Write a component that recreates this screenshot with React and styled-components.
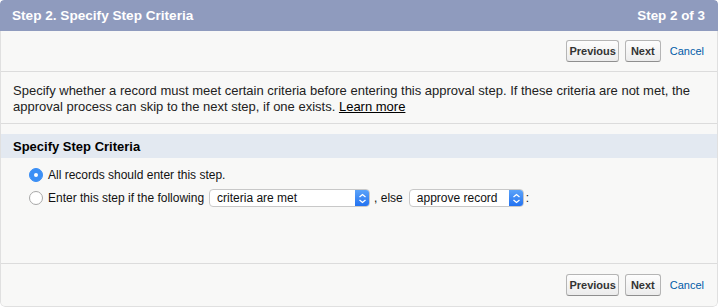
import styled, { createGlobalStyle } from "styled-components";

const GlobalStyle = createGlobalStyle`
  html, body {
    margin: 0;
    padding: 0;
    background: #ffffff;
  }
  body {
    font-family: "Liberation Sans", Arial, sans-serif;
  }
`;

export default function App() {
  return (
    <>
      <GlobalStyle />
      <Page>
        <Header>
          <Title>Step 2. Specify Step Criteria</Title>
          <StepCount>Step 2 of 3</StepCount>
        </Header>
        <Body>
          <ButtonRow>
            <Button $pad={2}>Previous</Button>
            <Button $pad={5}>Next</Button>
            <CancelLink>Cancel</CancelLink>
          </ButtonRow>
          <Description>
            Specify whether a record must meet certain criteria before entering this approval step. If these
            criteria are not met, the approval process can skip to the next step, if one exists.{" "}
            <LearnMore>Learn more</LearnMore>
          </Description>
          <Section>
            <SectionTitle>Specify Step Criteria</SectionTitle>
            <Options>
              <Option>
                <Radio checked />
                <span>All records should enter this step.</span>
              </Option>
              <Option>
                <Radio />
                <span>Enter this step if the following</span>
                <Select width={161}>
                  <span>criteria are met</span>
                  <Stepper />
                </Select>
                <Else>, else</Else>
                <Select width={115}>
                  <span>approve record</span>
                  <Stepper />
                </Select>
                <Colon>:</Colon>
              </Option>
            </Options>
          </Section>
          <ButtonRow $bottom>
            <Button $pad={2}>Previous</Button>
            <Button $pad={5}>Next</Button>
            <CancelLink>Cancel</CancelLink>
          </ButtonRow>
        </Body>
      </Page>
    </>
  );
}

function Stepper() {
  return (
    <StepperBox>
      <svg width="9" height="11" viewBox="0 0 9 11">
        <path d="M1.5 4 L4.5 1.5 L7.5 4" fill="none" stroke="#fff" strokeWidth="1.3" />
        <path d="M1.5 7 L4.5 9.5 L7.5 7" fill="none" stroke="#fff" strokeWidth="1.3" />
      </svg>
    </StepperBox>
  );
}

const Page = styled.div`
  width: 718px;
  height: 307px;
  display: flex;
  flex-direction: column;
  overflow: hidden;
  border-radius: 4px 4px 5px 5px;
`;

const Header = styled.div`
  height: 31px;
  background: #8f9bbe;
  display: flex;
  align-items: center;
  justify-content: space-between;
  padding: 0 13px 0 12px;
  border-radius: 4px 4px 0 0;
  flex-shrink: 0;
`;

const Title = styled.div`
  color: #fff;
  font-weight: bold;
  font-size: 13.6px;
`;

const StepCount = styled(Title)`
  font-size: 13.4px;
`;

const Body = styled.div`
  flex: 1;
  display: flex;
  flex-direction: column;
  background: #f8f8f7;
  border-left: 1px solid #e0e0e0;
  border-right: 1px solid #e0e0e0;
  border-bottom: 1px solid #e0e0e0;
  border-radius: 0 0 5px 5px;
`;

const ButtonRow = styled.div`
  display: flex;
  justify-content: flex-end;
  align-items: center;
  gap: 6px;
  height: ${(p) => (p.$bottom ? "42px" : "40px")};
  padding-right: 13px;
  border-bottom: ${(p) => (p.$bottom ? "none" : "1px solid #dcdcdc")};
  border-top: ${(p) => (p.$bottom ? "1px solid #dcdcdc" : "none")};
  margin-top: ${(p) => (p.$bottom ? "auto" : "0")};
`;

const Button = styled.button`
  font-family: "Liberation Sans", Arial, sans-serif;
  font-weight: bold;
  font-size: 11px;
  color: #333;
  height: 22px;
  padding: 0 ${(p) => p.$pad}px;
  background: linear-gradient(#fdfdfd, #ececec);
  border: 1px solid #b5b5b5;
  border-bottom-color: #8f8f8f;
  border-radius: 3px;
`;

const CancelLink = styled.a`
  font-size: 11px;
  color: #015ba7;
  margin-left: 3px;
`;

const Description = styled.p`
  margin: 0;
  padding: 11px 12px 8px 12px;
  font-size: 13px;
  line-height: 16px;
  color: #222;
  border-bottom: 1px solid #dcdcdc;
`;

const LearnMore = styled.a`
  color: #000;
  text-decoration: underline;
`;

const Section = styled.div`
  margin-top: 10px;
  display: flex;
  flex-direction: column;
`;

const SectionTitle = styled.div`
  background: #e3e9f1;
  height: 24px;
  display: flex;
  align-items: center;
  padding-left: 12px;
  font-weight: bold;
  font-size: 13px;
  color: #000;
`;

const Options = styled.div`
  padding: 8px 0 0 28px;
  display: flex;
  flex-direction: column;
  gap: 5px;
`;

const Option = styled.div`
  display: flex;
  align-items: center;
  height: 18px;
  font-size: 12px;
  color: #111;
  gap: 5px;
`;

const Else = styled.span`
  margin: 0 1px 0 -1px;
`;

const Colon = styled.span`
  margin-left: -3px;
`;

const Radio = styled.span`
  width: 14px;
  height: 14px;
  border-radius: 50%;
  box-sizing: border-box;
  display: inline-flex;
  align-items: center;
  justify-content: center;
  background: ${(p) => (p.checked ? "#3b8ff5" : "#fff")};
  border: 1px solid ${(p) => (p.checked ? "#3b8ff5" : "#a8a8a8")};
  &::after {
    content: "";
    width: 4px;
    height: 4px;
    border-radius: 50%;
    background: #fff;
    display: ${(p) => (p.checked ? "block" : "none")};
  }
`;

const Select = styled.div`
  width: ${(p) => p.width}px;
  height: 18px;
  box-sizing: border-box;
  display: flex;
  align-items: center;
  justify-content: space-between;
  background: #fff;
  border: 1px solid #c8c8c8;
  border-radius: 4px;
  padding-left: 7px;
  font-size: 12px;
  color: #111;
  overflow: hidden;
`;

const StepperBox = styled.span`
  width: 15px;
  height: 18px;
  margin-right: -1px;
  background: linear-gradient(#5fa6f9, #1f6ff0);
  display: flex;
  align-items: center;
  justify-content: center;
  border-radius: 0 4px 4px 0;
`;
